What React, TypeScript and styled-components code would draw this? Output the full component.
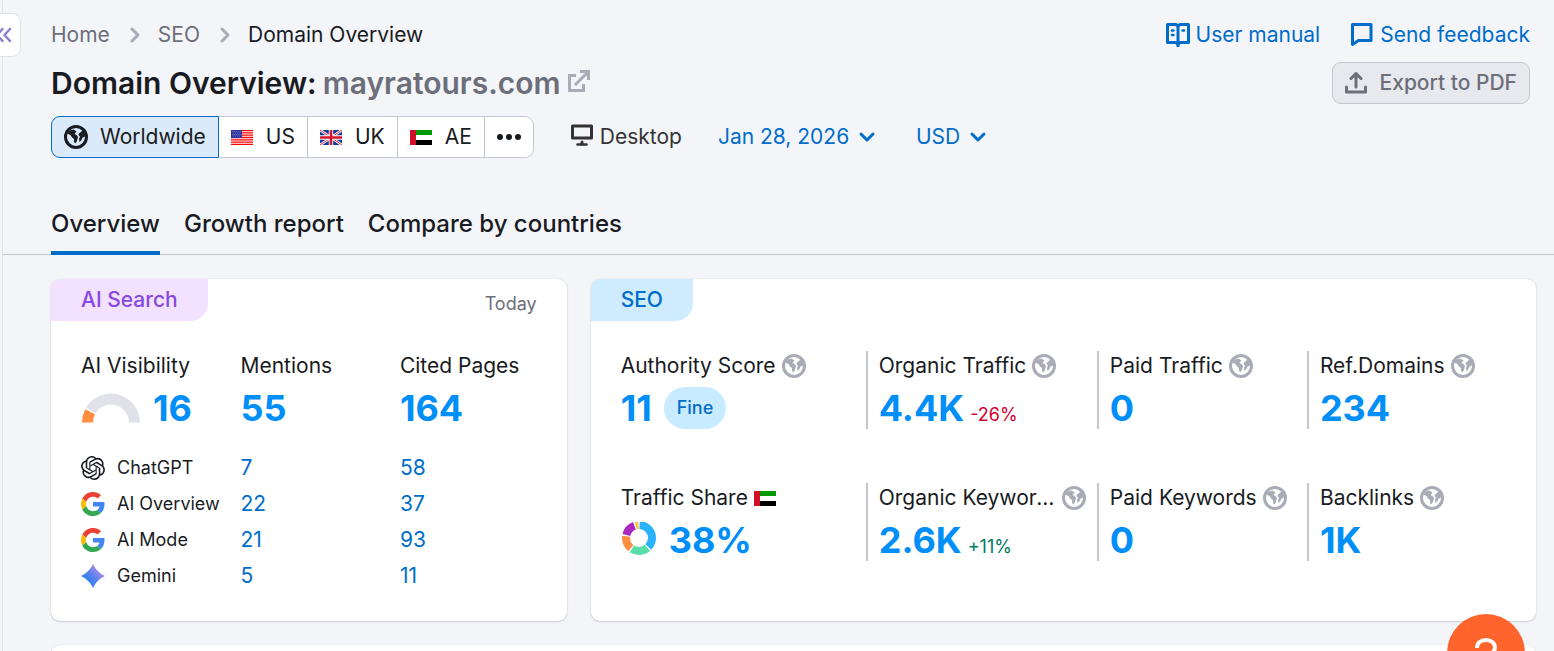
import React from 'react';
import styled, { createGlobalStyle } from 'styled-components';
import { SiOpenai } from 'react-icons/si';

const Global = createGlobalStyle`
  *, *::before, *::after { box-sizing: border-box; }
  html, body, #root { height: 100%; }
  body {
    margin: 0;
    overflow: hidden;
    background: #f4f5f9;
    color: #191b23;
    font-family: Inter, "Liberation Sans", sans-serif;
    font-size: 21px;
    line-height: 30px;
  }
  button, select { font: inherit; color: inherit; }
  svg { display: block; flex: none; }
`;

const Shell = styled.div`
  position: relative;
  height: 100%;
  margin-left: 2px;
  border-left: 1px solid #e0e1e9;
`;

const CollapseButton = styled.button`
  position: absolute;
  top: 13px;
  left: -12px;
  display: flex;
  align-items: center;
  justify-content: flex-end;
  width: 30px;
  height: 44px;
  padding: 0 8px 0 0;
  border: 1px solid #e0e1e9;
  border-radius: 0 9px 9px 0;
  background: #fff;
  color: #8b7fcf;
`;

const Header = styled.header`
  display: grid;
  gap: 12px;
  padding: 20px 24px 0 48px;
`;

const Bar = styled.div`
  display: flex;
  align-items: center;
  justify-content: space-between;
`;

const Crumbs = styled.nav`
  display: flex;
  align-items: center;
  gap: 18px;
`;

const Crumb = styled.a<{ $current?: boolean }>`
  color: ${p => (p.$current ? '#191b23' : '#6c6e79')};
  text-decoration: none;
`;

const CrumbArrow = styled.span`
  color: #a9abb6;
`;

const HelpLinks = styled.div`
  display: flex;
  gap: 30px;
`;

const HelpLink = styled.a`
  display: flex;
  align-items: center;
  gap: 6px;
  color: #006dca;
  text-decoration: none;
`;

const Title = styled.h1`
  display: flex;
  align-items: center;
  gap: 6px;
  margin: 0;
  font-size: 30px;
  line-height: 42px;
  font-weight: 600;
`;

const DomainLink = styled.a`
  display: flex;
  align-items: center;
  gap: 7px;
  color: #6c6e79;
  text-decoration: none;
  svg { margin-bottom: 4px; color: #a9abb6; }
`;

const ExportButton = styled.button`
  display: flex;
  align-items: center;
  gap: 13px;
  height: 42px;
  padding: 0 12px;
  border: 1px solid #c4c7cf;
  border-radius: 9px;
  background: #e8e9ef;
  color: #6c6e79;
  font-weight: 500;
`;

const Filters = styled.div`
  display: flex;
  align-items: center;
  gap: 36px;
`;

const Segments = styled.div`
  display: flex;
`;

const Segment = styled.button<{ $active?: boolean }>`
  display: flex;
  align-items: center;
  gap: ${p => (p.$active ? 12 : 13)}px;
  height: 42px;
  padding: 0 12px;
  border: 1px solid ${p => (p.$active ? '#006dca' : '#c4c7cf')};
  background: ${p => (p.$active ? '#dbeafa' : '#fff')};
  & + & { border-left: 0; }
  &:first-child { border-radius: 9px 0 0 9px; }
  &:last-child { border-radius: 0 9px 9px 0; }
`;

const Device = styled.div`
  display: flex;
  align-items: center;
  gap: 7px;
  padding-left: 1px;
  color: #333;
  svg { margin-bottom: 4px; }
`;

const Picker = styled.label`
  display: grid;
  align-items: center;
  color: #006dca;
  select {
    grid-area: 1 / 1;
    appearance: none;
    border: 0;
    padding: 0 30px 0 0;
    background: transparent;
  }
  svg { grid-area: 1 / 1; justify-self: end; margin-right: 4px; pointer-events: none; }
`;

const Tabs = styled.nav`
  display: flex;
  gap: 24px;
  margin-top: 42px;
  padding-left: 48px;
  border-bottom: 1px solid #c4c7cf;
`;

const Tab = styled.a<{ $active?: boolean }>`
  height: 55px;
  padding-top: 6px;
  margin-bottom: -1px;
  border-bottom: 4px solid ${p => (p.$active ? '#006dca' : 'transparent')};
  font-size: 24px;
  line-height: 36px;
  font-weight: 500;
  color: #191b23;
  text-decoration: none;
`;

const Cards = styled.main`
  display: grid;
  grid-template-columns: 6fr 11fr;
  gap: 24px;
  padding: 24px 18px 24px 48px;
`;

const Card = styled.section`
  border-radius: 9px;
  background: #fff;
  box-shadow: 0 0 1px rgba(25, 27, 35, 0.2), 0 1px 2px rgba(25, 27, 35, 0.16);
  overflow: hidden;
`;

const WideCard = styled(Card)`
  grid-column: 1 / -1;
  height: 120px;
`;

const CardHead = styled.div`
  display: flex;
  justify-content: space-between;
  padding-right: 30px;
`;

const CardTag = styled.h2<{ $bg: string; $color: string }>`
  height: 42px;
  margin: 0;
  padding: 6px 30px;
  border-bottom-right-radius: 18px;
  background: ${p => p.$bg};
  color: ${p => p.$color};
  font-size: 21px;
  font-weight: 500;
`;

const Period = styled.span`
  padding-top: 10px;
  font-size: 18px;
  color: #6c6e79;
`;

const AiTable = styled.table`
  width: calc(100% - 60px);
  margin: 30px 30px 27px;
  border-collapse: collapse;
  table-layout: fixed;
  text-align: left;
  th, td { padding: 0; font-weight: 400; height: 36px; }
  thead th { height: 30px; }
  tbody th { font-size: 18px; }
  tr.total td { height: 69px; padding-bottom: 15px; }
`;

const Inline = styled.div<{ $gap: number }>`
  display: flex;
  align-items: center;
  gap: ${p => p.$gap}px;
`;

const Num = styled.a`
  color: #006dca;
  text-decoration: none;
`;

const Big = styled.a`
  color: #008ff8;
  font-size: 36px;
  line-height: 42px;
  font-weight: 700;
  text-decoration: none;
`;

const Metrics = styled.div`
  display: grid;
  grid-template-columns: 245fr 231fr 210fr 199fr;
  row-gap: 54px;
  padding: 30px 30px 60px;
`;

const Metric = styled.div`
  min-width: 0;
  height: 78px;
  padding: 0 11px;
  border-left: 2px solid #c4c7cf;
  &:nth-child(4n + 1) { padding-left: 0; border-left: 0; }
`;

const MetricLabel = styled.div`
  display: flex;
  align-items: center;
  gap: 6px;
  height: 30px;
  color: #a9abb6;
`;

const Clip = styled.span`
  overflow: hidden;
  color: #191b23;
  text-overflow: ellipsis;
  white-space: nowrap;
`;

const MetricValue = styled.div`
  display: flex;
  align-items: baseline;
  gap: 6px;
  padding-top: 6px;
`;

const Change = styled.span<{ $up?: boolean }>`
  font-size: 18px;
  line-height: 24px;
  color: ${p => (p.$up ? '#007c65' : '#d1002f')};
`;

const Badge = styled.span`
  align-self: center;
  height: 42px;
  margin-left: 6px;
  padding: 0 13px;
  border-radius: 21px;
  background: #c9ebff;
  color: #006dca;
  font-size: 18px;
  line-height: 42px;
  font-weight: 500;
`;

const HelpBubble = styled.button`
  position: fixed;
  right: 29px;
  bottom: -41px;
  width: 78px;
  height: 78px;
  padding: 4px 0 0;
  border: 0;
  border-radius: 50%;
  background: #ff642d;
  color: #fff;
  svg { margin: 0 auto; }
`;

const SourceIcon = styled.span`
  width: 24px;
`;

const Globe = () => (
  <svg width="24" height="24" viewBox="0 0 24 24" fill="currentColor" aria-hidden="true">
    <path fillRule="evenodd" d="M12 0a12 12 0 1 0 0 24 12 12 0 0 0 0-24Zm0 3a9 9 0 1 1 0 18 9 9 0 0 1 0-18Z" />
    <path d="M3 8.500 6 5.500 9.500 4.500 12.500 6.500 10.500 9 12.500 10 14 12 13.500 14 12.500 17 11 18.500 10 16.500 10 14 8 12.500 6.500 10Z" />
    <path d="M15 8.500 17 7 18.500 5 21.500 9 20.500 12 18.500 12.500 17.500 15 15.500 17 15 14 16 11.500 14.500 10Z" />
  </svg>
);

const ChevronRight = () => (
  <svg width="12" height="18" viewBox="0 0 12 18" fill="none" stroke="currentColor" strokeWidth="3" strokeLinecap="round" strokeLinejoin="round" aria-hidden="true">
    <path d="m4 3 6 6-6 6" />
  </svg>
);

const ChevronDown = () => (
  <svg width="18" height="12" viewBox="0 0 18 12" fill="none" stroke="currentColor" strokeWidth="3" strokeLinecap="round" strokeLinejoin="round" aria-hidden="true">
    <path d="m3 3 6 6 6-6" />
  </svg>
);

const FlagUS = () => (
  <svg width="22" height="15" viewBox="0 0 22 15" aria-hidden="true">
    <path fill="#fff" d="M0 0h22v15H0z" />
    <path stroke="#f00" strokeWidth="1.300" d="M0 .6h22M0 2.900h22M0 5.200h22M0 7.500h22M0 9.800h22M0 12.100h22M0 14.400h22" />
    <path fill="#2a2f9c" d="M0 0h11v8H0z" />
    <path stroke="#9ea1d6" strokeWidth=".8" strokeDasharray=".8 1.200" d="M1 1.500h9.500M2 3h8.500M1 4.500h9.500M2 6h8.500" />
  </svg>
);

const FlagUK = () => (
  <svg width="22" height="15" viewBox="0 0 22 15" aria-hidden="true">
    <path fill="#1238a0" d="M0 0h22v15H0z" />
    <path stroke="#fff" strokeWidth="2.600" d="m0 0 22 15M22 0 0 15" />
    <path stroke="#e0303f" strokeWidth="1" d="m0 0 22 15M22 0 0 15" />
    <path stroke="#fff" strokeWidth="4.400" d="M11 0v15M0 7.500h22" />
    <path stroke="#d8142c" strokeWidth="2.600" d="M11 0v15M0 7.500h22" />
  </svg>
);

const FlagAE = () => (
  <svg width="22" height="15" viewBox="0 0 22 15" aria-hidden="true">
    <path fill="#090" d="M0 0h22v5H0z" />
    <path fill="#fff" d="M0 5h22v5H0z" />
    <path fill="#000" d="M0 10h22v5H0z" />
    <path fill="#ce1126" d="M0 0h6v15H0z" />
  </svg>
);

const Google = () => (
  <svg width="24" height="24" viewBox="0 0 48 48" aria-hidden="true">
    <path fill="#ea4335" d="M24 9.500c3.540 0 6.710 1.220 9.210 3.600l6.850-6.850C35.900 2.380 30.470 0 24 0 14.620 0 6.510 5.380 2.560 13.220l7.980 6.190C12.430 13.720 17.740 9.500 24 9.500z" />
    <path fill="#4285f4" d="M46.980 24.550c0-1.570-.15-3.090-.38-4.550H24v9.020h12.940c-.58 2.960-2.260 5.480-4.780 7.180l7.730 6c4.510-4.180 7.090-10.360 7.090-17.650z" />
    <path fill="#fbbc05" d="M10.530 28.590c-.48-1.450-.76-2.990-.76-4.590s.27-3.140.76-4.590l-7.980-6.190C.92 16.460 0 20.120 0 24c0 3.880.92 7.540 2.560 10.780l7.970-6.190z" />
    <path fill="#34a853" d="M24 48c6.480 0 11.930-2.130 15.890-5.810l-7.730-6c-2.150 1.450-4.920 2.300-8.160 2.300-6.260 0-11.570-4.220-13.470-9.910l-7.980 6.190C6.510 42.620 14.620 48 24 48z" />
  </svg>
);

const Gemini = () => (
  <svg width="24" height="24" viewBox="0 0 24 24" aria-hidden="true">
    <defs>
      <linearGradient id="gem" x1="4" y1="20" x2="20" y2="5" gradientUnits="userSpaceOnUse">
        <stop offset="0" stopColor="#1c7df0" />
        <stop offset=".5" stopColor="#5a83ee" />
        <stop offset="1" stopColor="#b08ae0" />
      </linearGradient>
    </defs>
    <path fill="url(#gem)" d="M12 0c2.300 5.200 6.800 9.700 12 12-5.200 2.300-9.700 6.800-12 12-2.300-5.200-6.800-9.700-12-12 5.200-2.300 9.700-6.800 12-12Z" />
  </svg>
);

const Gauge = () => (
  <svg width="60" height="30" viewBox="0 0 60 30" fill="none" strokeWidth="11" aria-hidden="true">
    <path stroke="#e0e1e9" d="M9.900 17.400A23.500 23.500 0 0 1 53.500 29.500" />
    <path stroke="#ff8e43" d="M6.500 29.500a23.500 23.500 0 0 1 2.600-10.700" />
  </svg>
);

const slices = [
  { color: '#2bb3ff', from: 0, size: 38 },
  { color: '#59ddaa', from: 38, size: 22 },
  { color: '#ff8e43', from: 60, size: 18 },
  { color: '#ab29bf', from: 78, size: 17 },
  { color: '#fdc23c', from: 95, size: 5 },
];

const Donut = () => (
  <svg width="36" height="36" viewBox="0 0 36 36" fill="none" strokeWidth="8" aria-hidden="true">
    {slices.map(s => (
      <circle key={s.color} cx="18" cy="16" r="13" stroke={s.color} pathLength="100" strokeDasharray={`${s.size - 1.5} ${101.5 - s.size}`} strokeDashoffset={-s.from - 0.75} transform="rotate(-90 18 16)" />
    ))}
  </svg>
);

const sources = [
  { name: 'ChatGPT', icon: <SiOpenai size={24} />, mentions: '7', cited: '58' },
  { name: 'AI Overview', icon: <Google />, mentions: '22', cited: '37' },
  { name: 'AI Mode', icon: <Google />, mentions: '21', cited: '93' },
  { name: 'Gemini', icon: <Gemini />, mentions: '5', cited: '11' },
];

type MetricProps = { label: string; value: string; icon?: React.ReactNode; lead?: React.ReactNode; children?: React.ReactNode };

const MetricCell = ({ label, value, icon = <Globe />, lead, children }: MetricProps) => (
  <Metric>
    <MetricLabel><Clip>{label}</Clip>{icon}</MetricLabel>
    <MetricValue>
      <Inline $gap={12}>{lead}<Big href="#">{value}</Big></Inline>
      {children}
    </MetricValue>
  </Metric>
);

export default function App() {
  return (
    <>
      <Global />
      <Shell>
        <Header>
          <Bar>
            <Crumbs aria-label="Breadcrumb">
              <Crumb href="#">Home</Crumb>
              <CrumbArrow><ChevronRight /></CrumbArrow>
              <Crumb href="#">SEO</Crumb>
              <CrumbArrow><ChevronRight /></CrumbArrow>
              <Crumb href="#" $current>Domain Overview</Crumb>
            </Crumbs>
            <HelpLinks>
              <HelpLink href="#">
                <svg width="24" height="24" viewBox="0 0 24 24" fill="none" stroke="currentColor" strokeWidth="3" aria-hidden="true">
                  <path strokeLinejoin="round" d="M1.500 1.500H10l2 1.500 2-1.500h8.500v18H14l-2 1.500-2-1.500H1.500Z" />
                  <path d="M12 2.500V24" />
                  <path strokeWidth="2.500" strokeLinecap="round" d="M6 7.500h1.500M6 12h1.500M16.500 7.500H18" />
                </svg>
                User manual
              </HelpLink>
              <HelpLink href="#">
                <svg width="24" height="24" viewBox="0 0 24 24" fill="none" stroke="currentColor" strokeWidth="3" strokeLinejoin="round" aria-hidden="true">
                  <path d="M2.500 1.500h18.500v16H8.500l-6 4Z" />
                </svg>
                Send feedback
              </HelpLink>
            </HelpLinks>
          </Bar>
          <Bar>
            <Title>
              Domain Overview:
              <DomainLink href="#">
                mayratours.com
                <svg width="22" height="22" viewBox="0 0 22 22" fill="none" stroke="currentColor" strokeWidth="3" aria-hidden="true">
                  <path d="M8 5.500H1.500v15h14V14" />
                  <path d="M7 15 19.500 2.500M12 1.500h8.500V10" />
                </svg>
              </DomainLink>
            </Title>
            <ExportButton type="button">
              <svg width="22" height="22" viewBox="0 0 22 22" fill="none" stroke="currentColor" strokeWidth="3" strokeLinecap="round" strokeLinejoin="round" aria-hidden="true">
                <path d="M11 15V3M6 6.500l5-5 5 5M1.500 15v5h19v-5" />
              </svg>
              Export to PDF
            </ExportButton>
          </Bar>
          <Filters>
            <Segments>
              <Segment type="button" $active aria-pressed="true"><Globe />Worldwide</Segment>
              <Segment type="button"><FlagUS />US</Segment>
              <Segment type="button"><FlagUK />UK</Segment>
              <Segment type="button"><FlagAE />AE</Segment>
              <Segment type="button" aria-label="More countries">
                <svg width="24" height="6" viewBox="0 0 24 6" fill="currentColor" aria-hidden="true">
                  <circle cx="3" cy="3" r="3" /><circle cx="12" cy="3" r="3" /><circle cx="21" cy="3" r="3" />
                </svg>
              </Segment>
            </Segments>
            <Device>
              <svg width="22" height="22" viewBox="0 0 22 22" fill="none" stroke="currentColor" strokeWidth="3" strokeLinecap="round" strokeLinejoin="round" aria-hidden="true">
                <path d="M1.500 2h19v12h-19zM11 18v2" />
                <path d="M6.500 20.500h9" strokeWidth="2.500" />
              </svg>
              Desktop
            </Device>
            <Picker>
              <select aria-label="Date" defaultValue="Jan 28, 2026"><option>Jan 28, 2026</option></select>
              <ChevronDown />
            </Picker>
            <Picker>
              <select aria-label="Currency" defaultValue="USD"><option>USD</option></select>
              <ChevronDown />
            </Picker>
          </Filters>
        </Header>
        <Tabs>
          <Tab href="#" $active>Overview</Tab>
          <Tab href="#">Growth report</Tab>
          <Tab href="#">Compare by countries</Tab>
        </Tabs>
        <Cards>
          <Card>
            <CardHead>
              <CardTag $bg="#f2e2ff" $color="#8649e1">AI Search</CardTag>
              <Period>Today</Period>
            </CardHead>
            <AiTable>
              <colgroup><col width="35%" /><col width="35%" /><col width="30%" /></colgroup>
              <thead>
                <tr><th scope="col">AI Visibility</th><th scope="col">Mentions</th><th scope="col">Cited Pages</th></tr>
              </thead>
              <tbody>
                <tr className="total">
                  <td><Inline $gap={12}><Gauge /><Big href="#">16</Big></Inline></td>
                  <td><Big href="#">55</Big></td>
                  <td><Big href="#">164</Big></td>
                </tr>
                {sources.map(s => (
                  <tr key={s.name}>
                    <th scope="row"><Inline $gap={12}><SourceIcon>{s.icon}</SourceIcon>{s.name}</Inline></th>
                    <td><Num href="#">{s.mentions}</Num></td>
                    <td><Num href="#">{s.cited}</Num></td>
                  </tr>
                ))}
              </tbody>
            </AiTable>
          </Card>
          <Card>
            <CardHead>
              <CardTag $bg="#cfecff" $color="#006dca">SEO</CardTag>
            </CardHead>
            <Metrics>
              <MetricCell label="Authority Score" value="11"><Badge>Fine</Badge></MetricCell>
              <MetricCell label="Organic Traffic" value="4.4K"><Change>-26%</Change></MetricCell>
              <MetricCell label="Paid Traffic" value="0" />
              <MetricCell label="Ref.Domains" value="234" />
              <MetricCell label="Traffic Share" value="38%" icon={<FlagAE />} lead={<Donut />} />
              <MetricCell label="Organic Keywords" value="2.6K"><Change $up>+11%</Change></MetricCell>
              <MetricCell label="Paid Keywords" value="0" />
              <MetricCell label="Backlinks" value="1K" />
            </Metrics>
          </Card>
          <WideCard />
        </Cards>
        <CollapseButton type="button" aria-label="Collapse menu">
          <svg width="16" height="16" viewBox="0 0 16 16" fill="none" stroke="currentColor" strokeWidth="2.500" strokeLinecap="round" strokeLinejoin="round" aria-hidden="true">
            <path d="M6.500 2 1 8l5.500 6M14 2 8.500 8l5.500 6" />
          </svg>
        </CollapseButton>
        <HelpBubble type="button" aria-label="Help">
          <svg width="24" height="36" viewBox="0 0 24 36" fill="none" stroke="currentColor" strokeWidth="4" aria-hidden="true">
            <path d="M3 11c0-5 4-8 9-8s9 3 9 8c0 6-9 6-9 13M12 29v5" />
          </svg>
        </HelpBubble>
      </Shell>
    </>
  );
}
